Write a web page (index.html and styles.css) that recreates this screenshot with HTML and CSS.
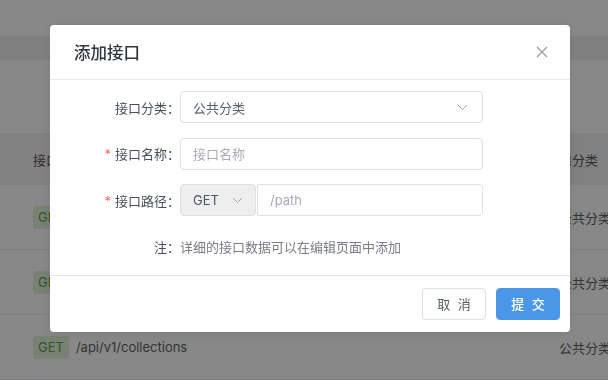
FILE: index.html
```html
<!DOCTYPE html>
<html lang="zh-CN">
<head>
    <meta charset="UTF-8">
    <meta name="viewport" content="width=device-width, initial-scale=1.0">
    <title>添加接口</title>
    <link rel="stylesheet" href="styles.css">
</head>
<body>
    <!-- Page behind the dialog -->
    <div class="page">
        <div class="topbar"></div>
        <div class="tabs"></div>
        <div class="toolbar"></div>
        <div class="api-table">
            <div class="api-row api-head">
                <span class="col-path">接口名称</span>
                <span class="col-cat">接口分类</span>
            </div>
            <div class="api-row">
                <span class="col-path"><span class="tag">GET</span>/api/v1/users</span>
                <span class="col-cat">公共分类</span>
            </div>
            <div class="api-row">
                <span class="col-path"><span class="tag">GET</span>/api/v1/projects</span>
                <span class="col-cat">公共分类</span>
            </div>
            <div class="api-row">
                <span class="col-path"><span class="tag">GET</span>/api/v1/collections</span>
                <span class="col-cat">公共分类</span>
            </div>
        </div>
    </div>

    <!-- Dialog -->
    <div class="mask">
        <div class="dialog">
            <div class="dialog-header">
                <h2 class="dialog-title">添加接口</h2>
                <svg class="close-icon" width="12" height="12" viewBox="0 0 12 12">
                    <path d="M1 1L11 11M11 1L1 11" stroke="#9a9ca3" stroke-width="1.3" fill="none"/>
                </svg>
            </div>

            <div class="dialog-body">
                <div class="form-row">
                    <label class="form-label">接口分类：</label>
                    <div class="select-box">
                        <span>公共分类</span>
                        <svg class="chevron" width="11" height="7" viewBox="0 0 11 7">
                            <path d="M1 1L5.5 5.5L10 1" stroke="#a3a6ad" stroke-width="1" fill="none"/>
                        </svg>
                    </div>
                </div>
                <div class="form-row">
                    <label class="form-label"><i class="req">*</i>接口名称：</label>
                    <input class="text-input" type="text" placeholder="接口名称">
                </div>
                <div class="form-row">
                    <label class="form-label"><i class="req">*</i>接口路径：</label>
                    <div class="path-group">
                        <div class="method-select">
                            <span>GET</span>
                            <svg class="chevron" width="11" height="7" viewBox="0 0 11 7">
                                <path d="M1 1L5.5 5.5L10 1" stroke="#a3a6ad" stroke-width="1" fill="none"/>
                            </svg>
                        </div>
                        <input class="text-input path-input" type="text" placeholder="/path">
                    </div>
                </div>
                <div class="form-row note-row">
                    <span class="form-label">注：</span>
                    <span class="note-text">详细的接口数据可以在编辑页面中添加</span>
                </div>
            </div>

            <div class="dialog-footer">
                <button class="btn btn-default">取 消</button>
                <button class="btn btn-primary">提 交</button>
            </div>
        </div>
    </div>
</body>
</html>
```

FILE: styles.css
```css
* {
    margin: 0;
    padding: 0;
    box-sizing: border-box;
}

body {
    font-family: Inter, 'Noto Sans CJK SC', sans-serif;
    background: #fff;
    color: #606266;
    width: 608px;
    height: 380px;
    overflow: hidden;
}

/* Background page */
.topbar {
    height: 36px;
    background: #fff;
}

.tabs {
    height: 24px;
    background: #f1f1f1;
}

.toolbar {
    height: 73px;
    background: #fff;
}

.api-row {
    display: flex;
    align-items: center;
    height: 65px;
    padding-left: 33px;
    border-bottom: 1px solid #ebeef5;
    font-size: 13px;
    color: #606266;
    white-space: nowrap;
}

.api-head {
    height: 52px;
    background: #f2f2f2;
    border-bottom: none;
    font-size: 13px;
    color: #555;
}

.col-path {
    flex: 1;
    display: flex;
    align-items: center;
}

.col-cat {
    width: 49px;
}

.api-head .col-cat {
    width: 62px;
}

.tag {
    display: inline-block;
    height: 23px;
    line-height: 23px;
    padding: 0 5px;
    margin-right: 7px;
    border-radius: 3px;
    background: #e3f2dc;
    color: #5b9f46;
    font-size: 13px;
}

/* Dialog */
.mask {
    position: fixed;
    inset: 0;
    background: rgba(0, 0, 0, 0.467);
    padding: 25px 0 0 50px;
}

.dialog {
    width: 520px;
    background: #fff;
    border-radius: 4px;
    box-shadow: 0 2px 12px rgba(0, 0, 0, 0.1);
}

.dialog-header {
    display: flex;
    align-items: center;
    justify-content: space-between;
    height: 55px;
    padding: 0 24px;
    border-bottom: 1px solid #e8e8e8;
}

.dialog-title {
    font-size: 16.5px;
    font-weight: 500;
    color: #2f343d;
}

.close-icon {
    margin-right: -2px;
}

.dialog-body {
    padding-top: 11px;
    padding-bottom: 12px;
    border-bottom: 1px solid #e8e8e8;
}

.form-row {
    display: flex;
    align-items: center;
    height: 32px;
    margin-bottom: 14.5px;
}

.form-label {
    width: 130px;
    text-align: right;
    font-size: 13px;
    color: #4a4f58;
}

.req {
    font-style: normal;
    color: #f56c6c;
    margin-right: 4px;
}

.select-box,
.text-input {
    width: 303px;
    height: 32px;
    border: 1px solid #dcdfe6;
    border-radius: 4px;
    padding: 0 12px;
    font-family: inherit;
    font-size: 13px;
    color: #5a6070;
    background: #fff;
}

.select-box {
    display: flex;
    align-items: center;
    justify-content: space-between;
}

.select-box .chevron {
    margin-right: 2px;
}

.text-input::placeholder {
    color: #a9acb3;
}

.path-group {
    display: flex;
}

.method-select {
    display: flex;
    align-items: center;
    justify-content: space-between;
    width: 76px;
    height: 32px;
    padding: 0 12px;
    background: #eeeeee;
    border: 1px solid #dcdfe6;
    border-radius: 4px;
    font-size: 13px;
    color: #4d5462;
}

.path-input {
    width: 226px;
    margin-left: 1px;
    border-radius: 0 4px 4px 0;
}

.note-row {
    margin-top: 11px;
    margin-bottom: 0;
    height: 32px;
}

.note-text {
    font-size: 13px;
    color: #7a7d83;
}

.dialog-footer {
    display: flex;
    justify-content: flex-end;
    gap: 10px;
    padding: 12px 10px 12px 0;
}

.btn {
    width: 64px;
    height: 32px;
    border-radius: 4px;
    font-family: inherit;
    font-size: 13px;
    letter-spacing: 2px;
    text-indent: 2px;
    cursor: pointer;
}

.btn-default {
    background: #fff;
    border: 1px solid #dcdfe6;
    color: #555a63;
}

.btn-primary {
    background: #4a97e8;
    border: 1px solid #4a97e8;
    color: #fff;
    font-weight: 500;
}
```
